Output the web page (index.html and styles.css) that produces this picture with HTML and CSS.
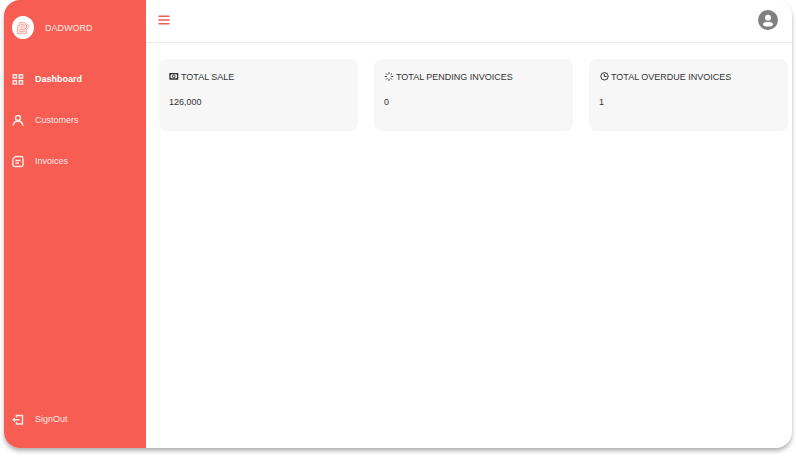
FILE: index.html
```html
<!DOCTYPE html>
<html lang="en">
<head>
<meta charset="utf-8">
<meta name="viewport" content="width=device-width, initial-scale=1">
<title>Dashboard</title>
<link rel="stylesheet" href="styles.css">
</head>
<body>
<div class="app">
  <aside class="sidebar">
    <a class="brand" href="#">
      <span class="brand-logo">
        <svg viewBox="0 0 14 14" width="14" height="14" fill="none" stroke="#f6b5b0" stroke-width="1">
          <path fill="#fde3e0" d="M1.500 4.500h2v-3h5l2 2v9h-9z"/>
          <path d="M3.500 6h4M3.500 8.500h6M3.500 10.500h6M5 3.500h3"/>
          <circle cx="10.500" cy="5.500" r="2.500" fill="#fff"/>
          <path stroke="#f08078" d="M10.500 4v3"/>
        </svg>
      </span>
      <span>DADWORD</span>
    </a>
    <nav class="nav">
      <a class="nav-link active" href="#">
        <svg class="icon" viewBox="0 0 12 12"><path d="M1.200 1.700h3.300V5H1.200zM7.300 1.700h3.300V5H7.300zM1.200 7.800h3.300v3.300H1.200zM7.300 7.800h3.300v3.300H7.300z"/></svg>
        <span>Dashboard</span>
      </a>
      <a class="nav-link" href="#">
        <svg class="icon" viewBox="0 0 12 12"><circle cx="6" cy="4" r="2.500"/><path d="M1.200 11.700c0-3 2-4.500 4.800-4.500s4.800 1.500 4.800 4.500"/></svg>
        <span>Customers</span>
      </a>
      <a class="nav-link" href="#">
        <svg class="icon" viewBox="0 0 12 12"><path d="M3.500 1.500h5.500a2 2 0 0 1 2 2v6a2 2 0 0 1-2 2H2.800a2 2 0 0 1-2-2V4zM3.500 5.500h5M3.500 8h3.500"/></svg>
        <span>Invoices</span>
      </a>
    </nav>
    <a class="nav-link" href="#">
      <svg class="icon" viewBox="0 0 12 12"><path d="M4.500 4.500V2.500h6v8.500h-6V9M1 6.800h6.500"/><path class="solid" d="M0 6.800l3-2.500v5z"/></svg>
      <span>SignOut</span>
    </a>
  </aside>
  <div class="main">
    <header class="topbar">
      <button class="icon-button" type="button" aria-label="Toggle menu">
        <svg viewBox="0 0 12 10" width="12" height="10" stroke="#f75d52" stroke-width="1.600"><path d="M.500 1.200h11M.500 5h11M.500 8.800h11"/></svg>
      </button>
      <button class="icon-button" type="button" aria-label="Account">
        <svg viewBox="0 0 20 20" width="20" height="20"><circle cx="10" cy="10" r="10" fill="#808080"/><circle cx="10" cy="7.800" r="3" fill="#fff"/><ellipse cx="10" cy="14.300" rx="5" ry="2.300" fill="#fff"/></svg>
      </button>
    </header>
    <main class="cards">
      <section class="card">
        <h2 class="card-title">
          <svg class="card-icon" viewBox="0 0 10 10"><path stroke-width="1.300" d="M1 1.700h7.600v5.300H1z"/><circle cx="4.800" cy="4.300" r="1.400"/><path d="M1 3.100l1.300-1.300M8.800 3.100L7.500 1.800M1 5.600l1.300 1.300M8.800 5.600L7.500 6.900"/></svg>
          <span>TOTAL SALE</span>
        </h2>
        <p class="card-value">126,000</p>
      </section>
      <section class="card">
        <h2 class="card-title">
          <svg class="card-icon" viewBox="0 0 10 10"><path d="M5 .200v2M5 6.800v2M.800 4.500h2M7.200 4.500h2M2 1.500l1.400 1.400M6.600 6.100L8 7.500M8 1.500L6.600 2.900M3.400 6.100L2 7.500"/></svg>
          <span>TOTAL PENDING INVOICES</span>
        </h2>
        <p class="card-value">0</p>
      </section>
      <section class="card">
        <h2 class="card-title">
          <svg class="card-icon" viewBox="0 0 10 10"><circle cx="5.500" cy="4.300" r="3.700"/><path d="M5.300 2v2.500h2.400"/></svg>
          <span>TOTAL OVERDUE INVOICES</span>
        </h2>
        <p class="card-value">1</p>
      </section>
    </main>
  </div>
</div>
</body>
</html>
```
FILE: styles.css
```css
* {
  box-sizing: border-box;
}

body {
  margin: 0;
  padding: 0 4px 8px;
  height: 100vh;
  background: #fff;
  color: #333;
  font: 9px/12px "Liberation Sans", Arial, sans-serif;
}

.app {
  display: flex;
  height: 100%;
  overflow: hidden;
  border-radius: 16px;
  background: #fff;
  box-shadow: 0 3px 4px rgba(0, 0, 0, 0.3);
}

.sidebar {
  display: flex;
  flex: 0 0 142px;
  flex-direction: column;
  padding: 16px 8px 23px;
  background: #f75d52;
}

.brand,
.nav-link {
  display: flex;
  align-items: center;
  gap: 11px;
  color: #ffe9e7;
  text-decoration: none;
}

.brand-logo {
  display: grid;
  place-items: center;
  width: 22px;
  height: 23px;
  border-radius: 50%;
  background: #fff;
}

.nav {
  display: flex;
  flex: 1;
  flex-direction: column;
  gap: 29px;
  padding-top: 34px;
}

.active {
  color: #fff;
  font-weight: bold;
}

.icon {
  width: 12px;
  height: 12px;
  overflow: visible;
  fill: none;
  stroke: #ffe9e7;
  stroke-width: 1.4;
}

.solid {
  fill: #ffe9e7;
  stroke: none;
}

.main {
  flex: 1;
  min-width: 0;
}

.topbar {
  display: flex;
  align-items: center;
  justify-content: space-between;
  padding: 10px 14px 12px 12px;
  border-bottom: 1px solid #ebebeb;
}

.icon-button {
  display: flex;
  padding: 0;
  border: 0;
  background: none;
}

.cards {
  display: grid;
  grid-template-columns: repeat(3, 1fr);
  gap: 16px;
  padding: 16px 4px 16px 13px;
}

.card {
  min-height: 72px;
  padding: 12px 10px;
  border-radius: 8px;
  background: #f7f7f7;
}

.card-title {
  display: flex;
  align-items: center;
  gap: 2px;
  margin: 0;
  font-size: inherit;
  font-weight: normal;
}

.card-icon {
  width: 10px;
  height: 10px;
  fill: none;
  stroke: #333;
  stroke-width: 1;
}

.card-value {
  margin: 13px 0 0;
}
```
